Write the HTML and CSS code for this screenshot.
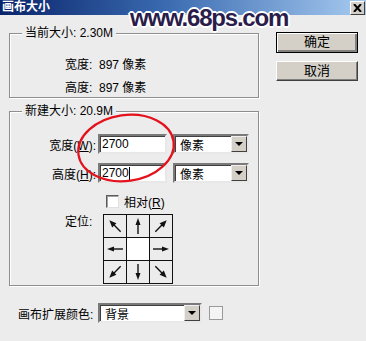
FILE: index.html
```html
<!DOCTYPE html>
<html lang="zh">
<head>
    <meta charset="UTF-8">
    <title>画布大小</title>
    <link rel="stylesheet" href="styles.css">
</head>
<body>
    <div class="window">
        <div class="titlebar">
            <span class="title">画布大小</span>
            <span class="close">
                <svg width="9" height="8" viewBox="0 0 9 8"><path d="M1 0 L8 8 M8 0 L1 8" stroke="#000" stroke-width="2"/></svg>
            </span>
        </div>

        <div class="main">
            <div class="left">
                <div class="group group-current">
                    <span class="legend">当前大小: 2.30M</span>
                    <div class="info-rows">
                        <div class="info-row">宽度:&nbsp; 897 像素</div>
                        <div class="info-row">高度:&nbsp; 897 像素</div>
                    </div>
                </div>

                <div class="group group-new">
                    <span class="legend">新建大小: 20.9M</span>
                    <div class="field-row first">
                        <span class="field-label">宽度(<u>W</u>):</span>
                        <span class="textbox">2700</span>
                        <span class="select unit">像素<span class="drop"></span></span>
                    </div>
                    <div class="field-row">
                        <span class="field-label">高度(<u>H</u>):</span>
                        <span class="textbox">2700<span class="caret"></span></span>
                        <span class="select unit">像素<span class="drop"></span></span>
                    </div>
                    <div class="check-row">
                        <span class="checkbox"></span>
                        <span>相对(<u>R</u>)</span>
                    </div>
                    <div class="anchor-row">
                        <span class="anchor-label">定位:</span>
                        <div class="anchor-grid">
                            <div class="cell"><svg width="22" height="22" viewBox="0 0 22 22"><g transform="rotate(-45 11 11)"><path d="M11 19 V9" stroke="#111" stroke-width="1.4"/><path d="M8 10 L11 3 L14 10 Z" fill="#111"/></g></svg></div>
                            <div class="cell"><svg width="22" height="22" viewBox="0 0 22 22"><path d="M11 19 V9" stroke="#111" stroke-width="1.4"/><path d="M8.5 10 L11 3 L13.5 10 Z" fill="#111"/></svg></div>
                            <div class="cell"><svg width="22" height="22" viewBox="0 0 22 22"><g transform="rotate(45 11 11)"><path d="M11 19 V9" stroke="#111" stroke-width="1.4"/><path d="M8 10 L11 3 L14 10 Z" fill="#111"/></g></svg></div>
                            <div class="cell"><svg width="22" height="22" viewBox="0 0 22 22"><g transform="rotate(-90 11 11)"><path d="M11 19 V9" stroke="#111" stroke-width="1.4"/><path d="M8.5 10 L11 3 L13.5 10 Z" fill="#111"/></g></svg></div>
                            <div class="cell center"></div>
                            <div class="cell"><svg width="22" height="22" viewBox="0 0 22 22"><g transform="rotate(90 11 11)"><path d="M11 19 V9" stroke="#111" stroke-width="1.4"/><path d="M8.5 10 L11 3 L13.5 10 Z" fill="#111"/></g></svg></div>
                            <div class="cell"><svg width="22" height="22" viewBox="0 0 22 22"><g transform="rotate(-135 11 11)"><path d="M11 19 V9" stroke="#111" stroke-width="1.4"/><path d="M8 10 L11 3 L14 10 Z" fill="#111"/></g></svg></div>
                            <div class="cell"><svg width="22" height="22" viewBox="0 0 22 22"><g transform="rotate(180 11 11)"><path d="M11 19 V9" stroke="#111" stroke-width="1.4"/><path d="M8.5 10 L11 3 L13.5 10 Z" fill="#111"/></g></svg></div>
                            <div class="cell"><svg width="22" height="22" viewBox="0 0 22 22"><g transform="rotate(135 11 11)"><path d="M11 19 V9" stroke="#111" stroke-width="1.4"/><path d="M8 10 L11 3 L14 10 Z" fill="#111"/></g></svg></div>
                        </div>
                    </div>
                </div>

                <div class="extend-row">
                    <span class="extend-label">画布扩展颜色:</span>
                    <span class="select extend">背景<span class="drop"></span></span>
                    <span class="swatch"></span>
                </div>
            </div>

            <div class="right">
                <div class="button default">确定</div>
                <div class="button">取消</div>
            </div>
        </div>

        <div class="watermark">www.68ps.com</div>

        <svg class="circle" width="110" height="80" viewBox="0 0 110 80">
            <ellipse cx="55" cy="40" rx="48" ry="33" transform="rotate(-8 55 40)" fill="none" stroke="#e3121c" stroke-width="2.2"/>
        </svg>
    </div>
</body>
</html>
```

FILE: styles.css
```css
body {
    margin: 0;
    padding: 0;
    font-family: "Liberation Sans", "Noto Sans CJK SC", sans-serif;
    font-size: 12px;
    color: #000;
}

.window {
    position: relative;
    width: 366px;
    height: 341px;
    background-color: #ececec;
    overflow: hidden;
}

.titlebar {
    height: 15px;
    background: linear-gradient(90deg, #0a246a 0%, #3a6ab0 45%, #a6caf0 100%);
    display: flex;
    justify-content: space-between;
    align-items: flex-start;
}

.title {
    color: #fff;
    font-weight: bold;
    font-size: 12px;
    line-height: 14px;
    margin-left: 2px;
}

.close {
    width: 13px;
    height: 12px;
    margin: 1px 1px 0 0;
    background-color: #d4d0c8;
    border: 1px solid;
    border-color: #fff #404040 #404040 #fff;
    display: flex;
    align-items: center;
    justify-content: center;
}

.main {
    display: flex;
    padding: 18px 0 0 9px;
}

.left {
    width: 250px;
}

.group {
    box-sizing: border-box;
    width: 250px;
    border: 1px solid #8e8e8e;
    box-shadow: inset 1px 1px 0 #fff, 1px 1px 0 #fff;
}

.group-current {
    height: 65px;
}

.group-new {
    height: 175px;
    margin-top: 13px;
}

.legend {
    display: inline-block;
    margin: -8px 0 0 12px;
    padding: 0 3px;
    height: 14px;
    line-height: 14px;
    background-color: #ececec;
    vertical-align: top;
}

.info-rows {
    margin-top: 6px;
    padding-left: 55px;
}

.info-row {
    height: 23px;
    line-height: 23px;
}

.field-row {
    display: flex;
    align-items: center;
    height: 20px;
    margin-top: 9px;
}

.field-row.first {
    margin-top: 8px;
}

.field-label {
    width: 86px;
    text-align: right;
    margin-right: 2px;
}

.textbox {
    box-sizing: border-box;
    width: 69px;
    height: 20px;
    line-height: 16px;
    padding-left: 2px;
    background-color: #fff;
    border: 2px solid;
    border-color: #7a7a7a #e8e8e8 #e8e8e8 #7a7a7a;
    box-shadow: inset 1px 1px 0 #404040;
    display: flex;
    align-items: center;
}

.caret {
    display: inline-block;
    width: 1px;
    height: 13px;
    background-color: #000;
}

.select {
    box-sizing: border-box;
    height: 20px;
    padding-left: 5px;
    background-color: #fff;
    border: 2px solid;
    border-color: #7a7a7a #e8e8e8 #e8e8e8 #7a7a7a;
    box-shadow: inset 1px 1px 0 #404040;
    display: flex;
    align-items: center;
    justify-content: space-between;
}

.select.unit {
    width: 76px;
    margin-left: 6px;
}

.drop {
    box-sizing: border-box;
    width: 16px;
    height: 16px;
    background-color: #d4d0c8;
    border: 1px solid;
    border-color: #f0f0f0 #404040 #404040 #f0f0f0;
    display: flex;
    align-items: center;
    justify-content: center;
}

.drop::after {
    content: "";
    border-left: 4px solid transparent;
    border-right: 4px solid transparent;
    border-top: 4px solid #000;
}

.check-row {
    display: flex;
    align-items: center;
    gap: 5px;
    margin: 12px 0 0 96px;
    height: 13px;
}

.checkbox {
    box-sizing: border-box;
    width: 13px;
    height: 13px;
    background-color: #fff;
    border: 1px solid;
    border-color: #5a5a5a #e0e0e0 #e0e0e0 #5a5a5a;
    box-shadow: inset 1px 1px 0 #a0a0a0;
}

.anchor-row {
    display: flex;
    align-items: flex-start;
    margin: 6px 0 0 55px;
}

.anchor-label {
    width: 38px;
    line-height: 14px;
    margin-top: 1px;
}

.anchor-grid {
    display: grid;
    grid-template-columns: repeat(3, 22px);
    grid-template-rows: repeat(3, 22px);
    gap: 1px;
    padding: 1px;
    background-color: #111;
}

.cell {
    background-color: #ececec;
    display: flex;
    align-items: center;
    justify-content: center;
}

.cell.center {
    background-color: #fff;
}

.extend-row {
    display: flex;
    align-items: center;
    margin: 17px 0 0 9px;
}

.extend-label {
    width: 80px;
}

.select.extend {
    width: 104px;
}

.swatch {
    box-sizing: border-box;
    width: 14px;
    height: 14px;
    margin-left: 7px;
    background-color: #f4f4f4;
    border: 1px solid #9a9a9a;
}

.right {
    margin-left: 17px;
    display: flex;
    flex-direction: column;
}

.button {
    box-sizing: border-box;
    width: 82px;
    height: 20px;
    margin-top: 8px;
    background-color: #d4d0c8;
    border: 1px solid;
    border-color: #fff #404040 #404040 #fff;
    box-shadow: inset -1px -1px 0 #808080;
    text-align: center;
    line-height: 17px;
    font-size: 13px;
}

.button.default {
    margin-top: -1px;
    height: 21px;
    border: 1px solid #000;
    box-shadow: inset 1px 1px 0 #fff, inset -2px -2px 0 #808080;
}

.watermark {
    position: absolute;
    left: 130px;
    top: 4px;
    font-family: "Liberation Sans", sans-serif;
    font-weight: bold;
    font-size: 24px;
    letter-spacing: -1.2px;
    color: #2a1d4c;
    text-shadow: 2px 0 0 #fff, -2px 0 0 #fff, 0 2px 0 #fff, 0 -2px 0 #fff, 1px 1px 0 #fff, -1px -1px 0 #fff, 1px -1px 0 #fff, -1px 1px 0 #fff;
}

.circle {
    position: absolute;
    left: 71px;
    top: 108px;
}
```
